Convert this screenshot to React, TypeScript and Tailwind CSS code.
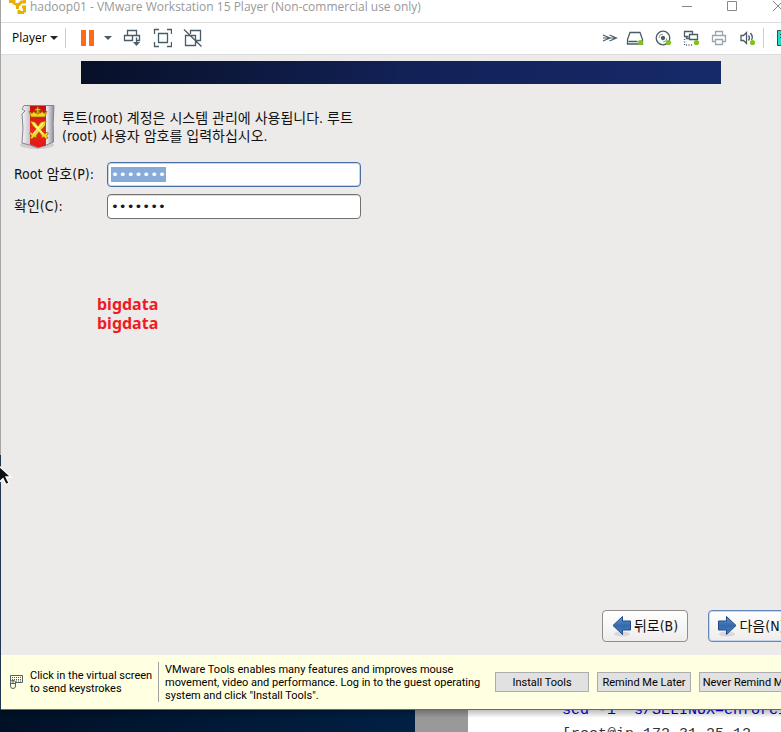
import { useEffect, useRef, type ReactNode } from "react";

function ToolButton({ label, children }: { label: string; children: ReactNode }) {
  return (
    <button type="button" aria-label={label} className="flex h-5 w-5 shrink-0 items-center justify-center">
      {children}
    </button>
  );
}

function Icon({ children, color = "#4a5c66" }: { children: ReactNode; color?: string }) {
  return (
    <svg width="20" height="20" viewBox="0 0 20 20" fill="none" stroke={color} strokeWidth="1.3">
      {children}
    </svg>
  );
}

function Caret({ color }: { color: string }) {
  return (
    <svg width="8" height="4" viewBox="0 0 8 4" fill={color}>
      <path d="M0 0h8L4 4z" />
    </svg>
  );
}

const greenDot = <circle cx="15.5" cy="14.5" r="2.6" fill="#7fc31c" stroke="none" />;

function TitleBar() {
  return (
    <header className="flex h-[22px] shrink-0 items-start justify-between overflow-hidden bg-white">
      <div className="flex items-start gap-1 pl-2">
        <svg width="17" height="14" viewBox="0 0 17 14" fill="none" stroke="#e9b000" strokeWidth="3">
          <path d="M0 1.500h5M5 0v3l3 1.500M6.500 4.500h5M8.500 3v6M10.500 4l2-2h3V0M13 7h2.500v5.500M15 12.500H9.500M10 10v4" />
        </svg>
        <h1 className="font-['Open_Sans',sans-serif] text-[12px] leading-[14px] whitespace-nowrap text-[#999]">
          hadoop01 - VMware Workstation 15 Player (Non-commercial use only)
        </h1>
      </div>
      <div className="-mr-[3px] flex shrink-0 gap-[35px] text-[#888]">
        <button type="button" aria-label="Minimize">
          <svg width="10" height="12" viewBox="0 0 10 12" stroke="currentColor"><path d="M0 6.500h10" /></svg>
        </button>
        <button type="button" aria-label="Maximize">
          <svg width="10" height="12" viewBox="0 0 10 12" fill="none" stroke="currentColor"><path d="M.5 1.500h9v9h-9z" /></svg>
        </button>
        <button type="button" aria-label="Close">
          <svg width="12" height="12" viewBox="0 0 12 12" stroke="currentColor"><path d="M1 1l10 10M11 1L1 11" /></svg>
        </button>
      </div>
    </header>
  );
}

function Toolbar() {
  return (
    <nav className="flex h-[33px] shrink-0 items-center justify-between overflow-hidden border-y border-[#dcdcdc] bg-white pb-0.5">
      <div className="flex items-center">
        <button type="button" className="flex items-center gap-[3px] pl-[11px] font-['Open_Sans',sans-serif] text-[12px] leading-4 text-black">
          Player <Caret color="#222" />
        </button>
        <span className="ml-[7px] h-5 w-px bg-[#ccc]" />
        <div className="ml-3 flex items-center gap-2.5">
          <button type="button" aria-label="Pause" className="flex items-center gap-2.5 pl-[3px]">
            <svg width="13" height="16" viewBox="0 0 13 16" fill="#ff6a1a"><path d="M0 0h5v16H0zM8 0h5v16H8z" /></svg>
            <Caret color="#4a5c66" />
          </button>
          <ToolButton label="Send Ctrl+Alt+Del">
            <Icon>
              <path d="M5.500 2.500h9v5h-9zM2.500 7.500h8v5h-8zM10.500 7.500h7v5h-3M14.500 9.500v7" />
              <path d="M11 14h7l-3.500 4z" fill="#4a5c66" stroke="none" />
            </Icon>
          </ToolButton>
          <ToolButton label="Full screen">
            <Icon>
              <path d="M6.500 5.500h9v9h-9zM2.500 6V1.500H7M15 1.500h4.500V6M19.500 14v4.500H15M7 18.500H2.500V14" />
            </Icon>
          </ToolButton>
          <ToolButton label="Unity">
            <Icon>
              <path d="M8.500 6V2.500h10v10H14M13.500 7.500h-10v10h10zM2 1.500L19.500 18.500" />
            </Icon>
          </ToolButton>
        </div>
      </div>
      <div className="-mr-[9px] flex items-center gap-2">
        <ToolButton label="Hide devices">
          <Icon><path d="M3 7l7 3-7 3M9.500 7l7 3-7 3M3 10h12" strokeWidth="1.100" /></Icon>
        </ToolButton>
        <div className="-ml-[3px]">
          <ToolButton label="Hard disk">
            <Icon>
              <path d="M5 4.500h10l2.500 7v4.500h-15v-4.500zM3.500 13.500h9" />{greenDot}
            </Icon>
          </ToolButton>
        </div>
        <ToolButton label="CD/DVD">
          <Icon>
            <circle cx="10" cy="10" r="6.800" /><circle cx="10" cy="10" r="1.500" fill="#4a5c66" />
            <path d="M6 10a4 4 0 0 1 4-4M10 14a4 4 0 0 0 4-4" strokeWidth=".6" />{greenDot}
          </Icon>
        </ToolButton>
        <ToolButton label="Network adapter">
          <Icon>
            <path d="M7.500 8.500h-4v-5h8V6M8.500 6.500h8v5h-8zM5.500 8.500v2h3" />
            <path d="M3.500 11v6h9" strokeDasharray="1 1.500" />{greenDot}
          </Icon>
        </ToolButton>
        <ToolButton label="Printer">
          <Icon color="#9aa5ac">
            <path d="M6.500 7.500v-4h7v4M6 13.500H3.500v-6h13v6H14M6.500 11.500h7v5h-7z" />
          </Icon>
        </ToolButton>
        <ToolButton label="Sound card">
          <Icon>
            <path d="M4 7.500h2.500l3-3v11l-3-3H4zM11.500 7.500q2 2.500 0 5M13.500 5q3 4 1 7" />{greenDot}
          </Icon>
        </ToolButton>
        <span className="-ml-0.5 h-5 w-px bg-[#ccc]" />
        <button type="button" aria-label="Messages" className="ml-[5px]">
          <svg width="13" height="16" viewBox="0 0 13 16" fill="#2adbc4" stroke="#334b55">
            <path d="M.5 .5h12v15H.5zM3 4.500h7M3 7.500h7" />
          </svg>
        </button>
      </div>
    </nav>
  );
}

function ShieldIcon() {
  return (
    <svg width="38" height="46" viewBox="0 0 38 46" className="shrink-0">
      <defs>
        <linearGradient id="steel" x1="0" x2="1">
          <stop offset="0" stopColor="#f8f8fa" /><stop offset=".25" stopColor="#c4c4ca" />
          <stop offset=".75" stopColor="#f5f5f8" /><stop offset="1" stopColor="#8c8c98" />
        </linearGradient>
        <linearGradient id="red" x2="0" y2="1">
          <stop offset="0" stopColor="#c80d0d" /><stop offset=".6" stopColor="#f0281c" /><stop offset="1" stopColor="#e01818" />
        </linearGradient>
      </defs>
      <ellipse cx="19" cy="41" rx="17" ry="4" fill="#000" opacity=".12" />
      <path d="M6 1.500h30Q34.500 20 35.500 38Q29 41 20 44Q13 41 4 39Q6 24 4 10L7 7L4 5z" fill="url(#steel)" stroke="#858590" />
      <path d="M12 2h16v39.500l-8 2-8-3z" fill="url(#red)" />
      <g fill="#f5d51f" stroke="#8f6a00" strokeWidth=".7">
        <path d="M11 7l3 2.500 2-2 2 2 1-3h2l1 3 2-2 2 2 3-2.500-2 6H13z" />
        <path d="M19 3h1.500v2h2v1.500h-2V10H19V6.500h-2V5h2z" />
        <path d="M12 17l5 1 3 4 3-4 5-1-1 5-4 4 4 4 2-2 1.500 1-2 3 1.500 2-2 1-2-2-3 1 1-2-3-4-3 4 1 2-3-1-2 2-2-1 1.500-2-2-3 1.500-1 2 2 4-4-4-4z" />
      </g>
      <path d="M15 19l10 11M25 19L15 30" stroke="#fff3a5" strokeWidth="1.200" />
    </svg>
  );
}

function Arrow({ back = false }: { back?: boolean }) {
  return (
    <svg width="20" height="22" viewBox="0 0 20 22" className="shrink-0">
      <defs>
        <linearGradient id="arrow" x2="0" y2="1">
          <stop offset="0" stopColor="#6695ca" /><stop offset=".5" stopColor="#346aac" /><stop offset="1" stopColor="#4b80bf" />
        </linearGradient>
      </defs>
      <ellipse cx="10" cy="19" rx="8" ry="2.500" fill="#000" opacity=".1" />
      <path d={back ? "M1 10.500L10.500 1.500V6H18.500v9h-8v4.500z" : "M19 10.500L9.500 1.500V6H1.500v9h8v4.500z"} fill="url(#arrow)" stroke="#204a87" />
    </svg>
  );
}

function VirtualScreen() {
  const rootRef = useRef<HTMLInputElement>(null);
  useEffect(() => {
    rootRef.current?.focus();
    rootRef.current?.select();
  }, []);
  const field =
    "h-[25px] w-[254px] rounded-[4px] border bg-white px-[3px] font-['DejaVu_Sans_Mono',monospace] text-[13px] text-[#1a1a1a] caret-transparent outline-none selection:bg-[#86abd9] selection:text-white";
  return (
    <main className="flex min-h-0 flex-1 flex-col overflow-hidden bg-[#edebe9] font-['DejaVu_Sans_Condensed','DejaVu_Sans','Noto_Sans_CJK_KR',sans-serif] text-[14px] text-[#111]">
      <div className="mt-1.5 mr-[60px] ml-20 h-[23px] shrink-0 bg-linear-to-r from-[#081028] via-[#122156] to-[#162a6a]" />
      <div className="mt-5 flex items-start gap-1.5 pl-[17px]">
        <ShieldIcon />
        <p className="mt-[5px] leading-[18px]">
          루트(root) 계정은 시스템 관리에 사용됩니다. 루트
          <br />
          (root) 사용자 암호를 입력하십시오.
        </p>
      </div>
      <form className="mt-3 grid grid-cols-[93px_auto] items-center justify-start gap-y-[7px] pl-[13px]">
        <label htmlFor="root-password">Root 암호(P):</label>
        <input ref={rootRef} id="root-password" type="password" defaultValue="bigdata" className={`${field} border-[#4a6fa5] shadow-[inset_0_0_0_1px_#c3d6ee]`} />
        <label htmlFor="confirm-password">확인(C):</label>
        <input id="confirm-password" type="password" defaultValue="bigdata" className={`${field} border-[#73706d] shadow-[inset_0_1px_0_#ddd]`} />
      </form>
      <p className="mt-[76px] pl-24 font-['Noto_Sans',sans-serif] text-[16px] leading-[19px] font-bold text-[#ed1c24]">
        bigdata
        <br />
        bigdata
      </p>
      <div className="mt-auto -mr-[13px] mb-[13px] flex shrink-0 justify-end gap-5">
        <button type="button" className="flex h-8 w-[86px] items-center justify-center gap-0.5 rounded-[4px] border border-[#908d8a] bg-linear-to-b from-white to-[#efedec] whitespace-nowrap">
          <Arrow back />뒤로(B)
        </button>
        <button type="button" className="flex h-8 w-[86px] items-center justify-center gap-0.5 rounded-[4px] border border-[#6488b8] bg-linear-to-b from-white to-[#efedec] whitespace-nowrap shadow-[inset_0_0_0_1px_#c3d6ee]">
          <Arrow />다음(N)
        </button>
      </div>
    </main>
  );
}

function ToolsNotice() {
  const button = "h-5 w-[94px] shrink-0 border border-[#adadad] bg-[#e1e1e1] whitespace-nowrap";
  return (
    <aside className="flex h-[55px] shrink-0 items-center overflow-hidden border-b border-[#6b6b60] bg-[#ffffe1] font-['Roboto',sans-serif] text-[11px] leading-[13px] text-black">
      <svg width="15" height="16" viewBox="0 0 15 16" fill="none" stroke="#55605f" className="ml-2 shrink-0">
        <path d="M1.500 7V1.500h12v7h-7" /><path d="M3 3.500h10M3 5.500h10M7 7h5" strokeDasharray="1 1" />
        <path d="M1.500 8q0-1.500 2.500-1.500T6.500 8v4q0 2.500-2.500 2.500T1.500 12zM1.500 9.500h5M4 6v3" />
      </svg>
      <p className="ml-1.5 w-32 shrink-0 whitespace-nowrap">
        Click in the virtual screen
        <br />
        to send keystrokes
      </p>
      <span className="h-10 w-px shrink-0 bg-[#a0a0a0]" />
      <p className="ml-1.5 shrink-0 whitespace-nowrap">
        VMware Tools enables many features and improves mouse
        <br />
        movement, video and performance. Log in to the guest operating
        <br />
        system and click "Install Tools".
      </p>
      <div className="-mr-3 ml-auto flex gap-2">
        <button type="button" className={button}>Install Tools</button>
        <button type="button" className={button}>Remind Me Later</button>
        <button type="button" className={button}>Never Remind Me</button>
      </div>
    </aside>
  );
}

function Desktop() {
  return (
    <footer className="relative flex h-[22px] shrink-0 overflow-hidden">
      <div className="w-[415px] shrink-0 bg-linear-to-r from-[#001127] to-[#002044]" />
      <div className="w-[53px] shrink-0 bg-[#999]" />
      <div className="flex flex-1 flex-col justify-center bg-white pt-1 pl-[94px] font-['Liberation_Mono',monospace] text-[15px] leading-6 whitespace-pre text-[#333]">
        <p className="text-[#0000e0]">sed -i 's/SELINUX=enforcing</p>
        <p>[root@ip-172-31-25-12</p>
      </div>
      <div className="absolute inset-x-0 top-0 h-2 bg-linear-to-b from-black/25 to-transparent" />
    </footer>
  );
}

export default function App() {
  return (
    <div className="relative flex h-screen flex-col overflow-hidden">
      <div className="flex min-h-0 flex-1">
        <div className="flex w-px shrink-0 flex-col">
          <div className="flex-[455] bg-[#a5a5a5]" />
          <div className="flex-[255] bg-[#233650]" />
        </div>
        <div className="flex min-w-0 flex-1 flex-col">
          <TitleBar />
          <Toolbar />
          <VirtualScreen />
          <ToolsNotice />
        </div>
      </div>
      <Desktop />
      <svg width="14" height="22" viewBox="0 0 14 22" className="absolute top-[464px] left-0">
        <path d="M-3 0L11 13H6l3 6-3 1.500-3-6-4 4z" fill="#111" stroke="#fff" strokeWidth="1.300" />
      </svg>
    </div>
  );
}
